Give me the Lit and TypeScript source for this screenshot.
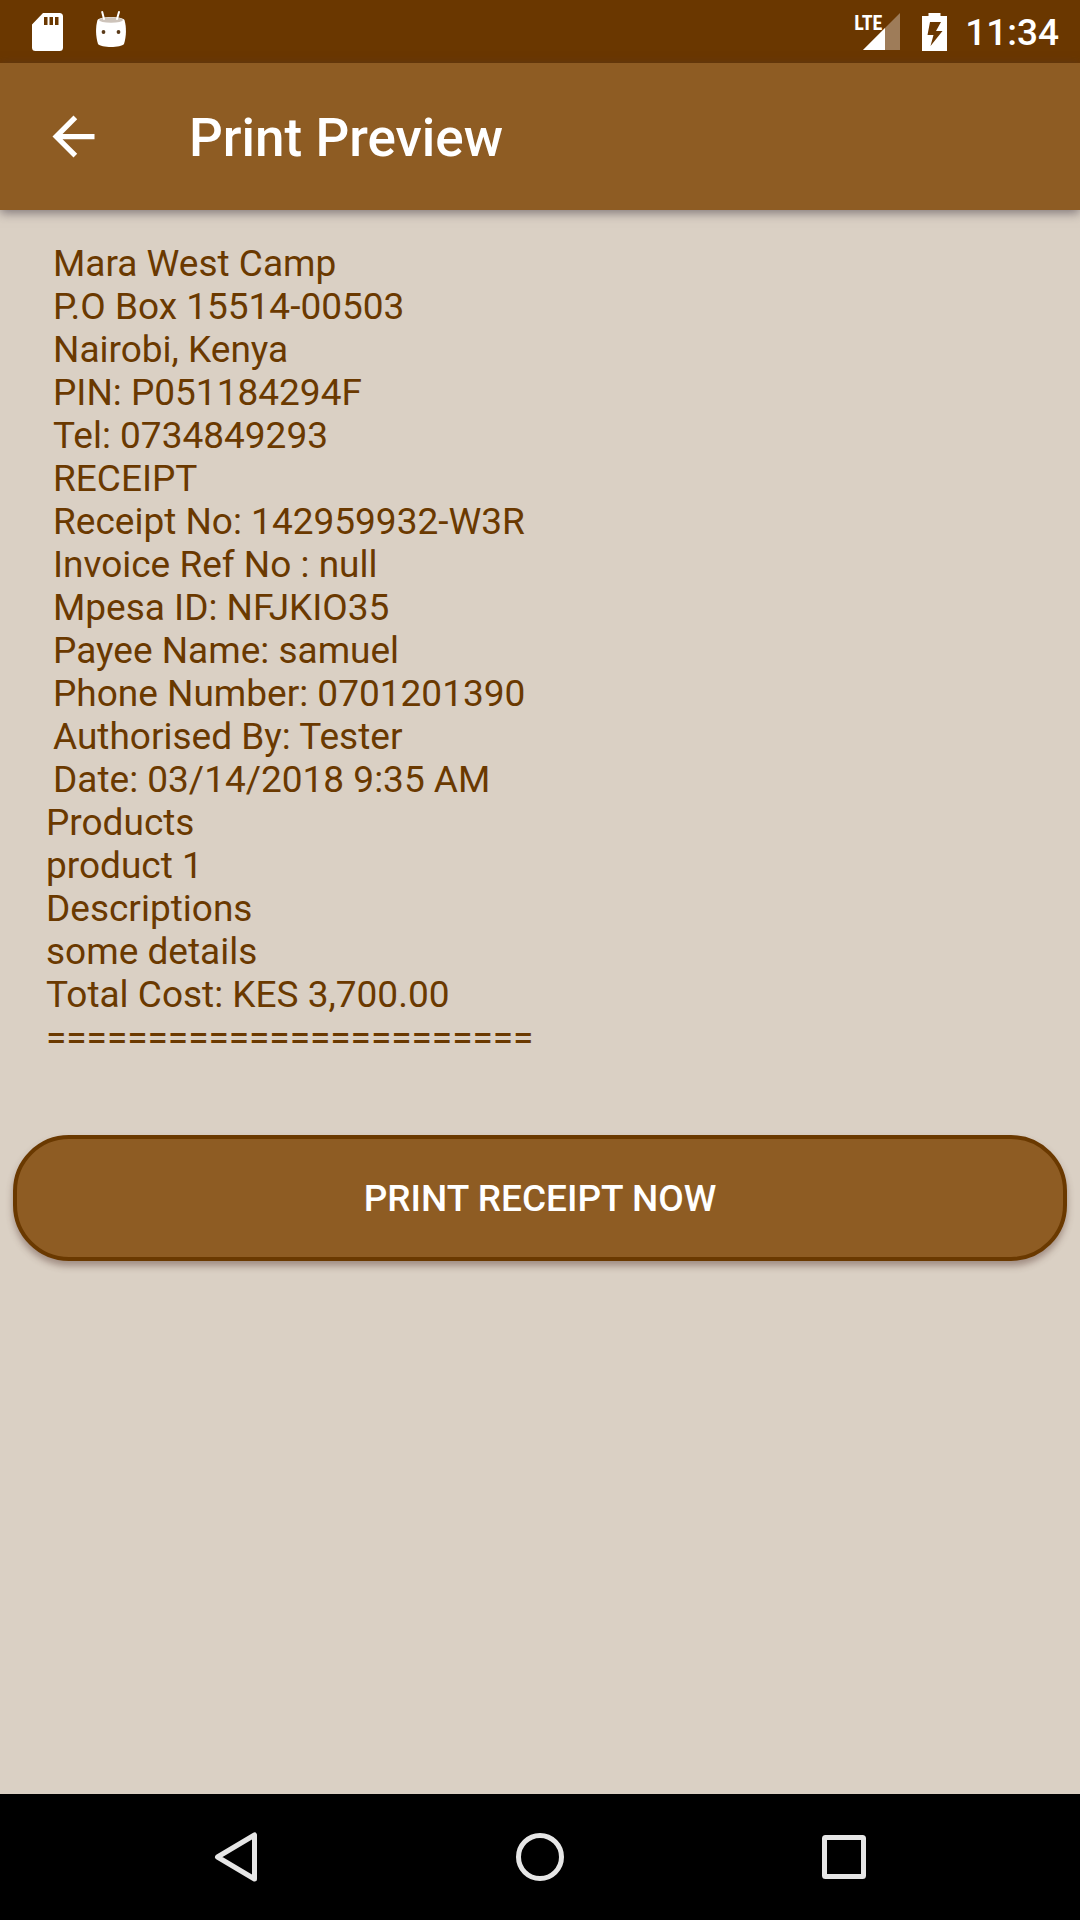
import { LitElement, html, css } from "lit";
import { customElement, property } from "lit/decorators.js";

const HEADER_LINES = [
  "Mara West Camp",
  "P.O Box 15514-00503",
  "Nairobi, Kenya",
  "PIN: P051184294F",
  "Tel: 0734849293",
  "RECEIPT",
  "Receipt No: 142959932-W3R",
  "Invoice Ref No : null",
  "Mpesa ID: NFJKIO35",
  "Payee Name: samuel",
  "Phone Number: 0701201390",
  "Authorised By: Tester",
  "Date: 03/14/2018 9:35 AM",
];

const PRODUCT_LINES = [
  "Products",
  "product 1",
  "Descriptions",
  "some details",
  "Total Cost: KES 3,700.00",
  "========================",
];

@customElement("status-bar")
export class StatusBar extends LitElement {
  @property() time = "";

  static styles = css`
    :host {
      display: block;
      background: #6a3700;
      color: #fff;
    }
    .bar {
      display: flex;
      align-items: center;
      justify-content: space-between;
      height: 63px;
      padding: 0 21px 0 32px;
    }
    .group {
      display: flex;
      align-items: center;
    }
    .notices {
      gap: 32px;
    }
    .system {
      gap: 18px;
    }
    svg {
      display: block;
    }
    .signal {
      position: relative;
    }
    .network {
      position: absolute;
      left: 0;
      top: 0;
      font: 700 20px/20px "Roboto Condensed", "Liberation Sans Narrow", sans-serif;
    }
    .time {
      font-size: 37px;
      font-weight: 500;
      line-height: 43px;
      padding-top: 2px;
    }
  `;

  render() {
    return html`
      <div class="bar">
        <div class="group notices">
          <svg width="31" height="38" viewBox="0 0 31 38" aria-hidden="true">
            <path
              fill="#fff"
              fill-rule="evenodd"
              d="M11 0H27.500Q31 0 31 3.500V34.500Q31 38 27.500 38H3.500Q0 38 0 34.500V11.500ZM12 4V12H15.500V4ZM17.500 4V12H21V4ZM23 4V12H26.500V4Z"
            />
          </svg>
          <svg width="32" height="44" viewBox="0 0 32 44" aria-hidden="true">
            <path
              fill="#fff"
              d="M2.500 10C5 6 27 6 29.500 10C31.500 17 31.500 26 29 34C26 38 6 38 3 34C.5 26 .5 17 2.500 10Z"
            />
            <ellipse cx="16" cy="10" rx="12" ry="2.800" fill="#cdc3ba" />
            <path
              d="M7.200 2L9 9M24 2L22 9"
              fill="none"
              stroke="#fff"
              stroke-width="2"
              stroke-linecap="round"
            />
            <circle cx="8.500" cy="22" r="1.900" fill="#5a3a18" />
            <circle cx="23.500" cy="22" r="1.900" fill="#5a3a18" />
          </svg>
        </div>
        <div class="group system">
          <div class="signal">
            <svg width="50" height="37" viewBox="0 0 50 37" aria-hidden="true">
              <path fill="#fff" fill-opacity=".35" d="M46 0V37H9Z" />
              <path fill="#fff" d="M31 15V37H9Z" />
            </svg>
            <span class="network">LTE</span>
          </div>
          <svg width="25" height="38" viewBox="0 0 25 38" aria-hidden="true">
            <path
              fill="#fff"
              fill-rule="evenodd"
              d="M6.500 0H18.500V3H25V38H0V3H6.500ZM8 9L5.500 22H11.500L8.500 33L20.500 18H14L19 9Z"
            />
          </svg>
          <span class="time">${this.time}</span>
        </div>
      </div>
    `;
  }
}

@customElement("app-bar")
export class AppBar extends LitElement {
  @property() heading = "";

  static styles = css`
    :host {
      display: block;
      position: relative;
      background: #8e5c23;
      color: #fff;
      box-shadow: 0 3px 10px rgba(70, 60, 70, 0.6);
    }
    .bar {
      display: flex;
      align-items: center;
      gap: 84px;
      height: 147px;
      padding: 0 42px;
    }
    .back {
      display: block;
      padding: 0;
      border: 0;
      background: none;
      color: inherit;
      cursor: pointer;
    }
    svg {
      display: block;
    }
    .title {
      margin: 0;
      padding-top: 3px;
      font-size: 53px;
      font-weight: 500;
      line-height: 61px;
    }
  `;

  render() {
    return html`
      <header class="bar">
        <button class="back" aria-label="Back">
          <svg width="63" height="63" viewBox="0 0 24 24" fill="currentColor">
            <path d="M20 11H7.830l5.590-5.590L12 4l-8 8 8 8 1.410-1.410L7.830 13H20v-2z" />
          </svg>
        </button>
        <h1 class="title">${this.heading}</h1>
      </header>
    `;
  }
}

@customElement("nav-bar")
export class NavBar extends LitElement {
  static styles = css`
    :host {
      display: block;
      background: #000;
    }
    .bar {
      display: grid;
      grid-template-columns: repeat(3, 1fr);
      height: 126px;
      padding: 0 84px;
    }
    .key {
      display: grid;
      place-items: center;
      padding: 0;
      border: 0;
      background: none;
      cursor: pointer;
    }
    svg {
      display: block;
      fill: none;
      stroke: #e6e6e6;
      stroke-width: 5;
      stroke-linejoin: round;
    }
  `;

  render() {
    return html`
      <nav class="bar">
        <button class="key" aria-label="Back">
          <svg width="52" height="52" viewBox="0 0 52 52">
            <path d="M44.500 4V48L7.500 26Z" />
          </svg>
        </button>
        <button class="key" aria-label="Home">
          <svg width="52" height="52" viewBox="0 0 52 52">
            <circle cx="26" cy="26" r="21.500" />
          </svg>
        </button>
        <button class="key" aria-label="Recent apps">
          <svg width="52" height="52" viewBox="0 0 52 52">
            <rect x="6.500" y="6.500" width="39" height="39" rx="1" />
          </svg>
        </button>
      </nav>
    `;
  }
}

@customElement("app-root")
export class AppRoot extends LitElement {
  static styles = css`
    :host {
      display: flex;
      flex-direction: column;
      min-height: 100vh;
      background: #dad0c4;
      font-family: Roboto, "Liberation Sans", sans-serif;
    }
    .content {
      flex: 1;
      display: flex;
      flex-direction: column;
      gap: 76px;
      padding: 32px 13px;
    }
    .receipt {
      padding: 0 33px;
      color: #6a3900;
      font-size: 37px;
      line-height: 43px;
    }
    .line {
      margin: 0;
    }
    .details {
      padding-left: 7px;
    }
    .print {
      height: 126px;
      border: 4px solid #6a3900;
      border-radius: 56px;
      background: #8e5c23;
      color: #fff;
      font: 500 37px/43px Roboto, "Liberation Sans", sans-serif;
      text-transform: uppercase;
      box-shadow: 0 5px 7px rgba(90, 60, 50, 0.45);
      cursor: pointer;
    }
  `;

  render() {
    return html`
      <status-bar time="11:34"></status-bar>
      <app-bar heading="Print Preview"></app-bar>
      <main class="content">
        <section class="receipt">
          <div class="details">${HEADER_LINES.map((line) => html`<p class="line">${line}</p>`)}</div>
          ${PRODUCT_LINES.map((line) => html`<p class="line">${line}</p>`)}
        </section>
        <button class="print">Print receipt now</button>
      </main>
      <nav-bar></nav-bar>
    `;
  }
}
